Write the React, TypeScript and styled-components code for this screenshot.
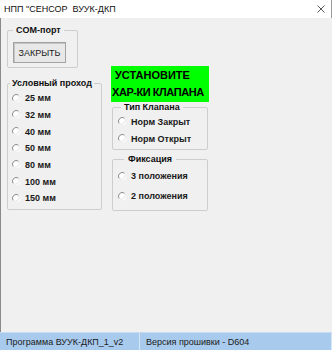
import React from 'react'
import styled, { createGlobalStyle } from 'styled-components'

const GlobalStyle = createGlobalStyle`
  html, body {
    margin: 0;
    padding: 0;
    width: 332px;
    height: 350px;
    overflow: hidden;
    background: #f0f0f0;
  }
  body {
    font-family: "Liberation Sans", Arial, sans-serif;
    color: #000;
  }
`

const Window = styled.div`
  width: 332px;
  height: 350px;
  display: flex;
  flex-direction: column;
  background: #f0f0f0;
`

const TitleBar = styled.div`
  height: 18px;
  flex: none;
  display: flex;
  align-items: center;
  justify-content: space-between;
  background: #fff;
  border-right: 1px solid #9a9a9a;
  box-sizing: border-box;
  padding: 0 6px 0 4px;
`

const Title = styled.span`
  font-size: 9px;
  white-space: pre;
  color: #111;
`

const Body = styled.div`
  flex: 1;
  display: flex;
  align-items: flex-start;
  gap: 9px;
  border-left: 1px solid #8a8a8a;
  padding: 7px 0 0 6px;
`

const Column = styled.div<{ $top?: number }>`
  display: flex;
  flex-direction: column;
  align-items: flex-start;
  margin-top: ${({ $top }) => $top ?? 0}px;
`

const Group = styled.fieldset<{ $width: number; $top?: number; $left?: number; $bottom?: number }>`
  width: ${({ $width }) => $width}px;
  box-sizing: border-box;
  margin: ${({ $top }) => $top ?? 0}px 0 0 ${({ $left }) => $left ?? 0}px;
  padding: 0 0 ${({ $bottom }) => $bottom ?? 2}px 0;
  border: 1px solid #cdcdcd;
  border-radius: 2px;
  min-width: 0;
`

const Legend = styled.legend<{ $left: number; $pad?: number }>`
  font-size: 9px;
  line-height: 11px;
  font-weight: bold;
  padding: 0 ${({ $pad }) => $pad ?? 3}px;
  margin-left: ${({ $left }) => $left}px;
  color: #111;
`

const ToggleButton = styled.div`
  width: 53px;
  height: 21px;
  box-sizing: border-box;
  margin: 6px 0 1px 5px;
  display: flex;
  align-items: center;
  justify-content: center;
  font-size: 9px;
  color: #222;
  background: #e8e8e8;
  border: 1px solid #a2a2a2;
  box-shadow: inset 1px 1px 0 #c4c4c4;
`

const RadioList = styled.div<{ $row: number; $left: number; $top?: number }>`
  display: flex;
  flex-direction: column;
  padding-left: ${({ $left }) => $left}px;
  margin-top: ${({ $top }) => $top ?? 0}px;
  & > div {
    height: ${({ $row }) => $row}px;
  }
`

const RadioRow = styled.div`
  display: flex;
  align-items: center;
  gap: 4px;
  font-size: 9px;
  font-weight: bold;
  color: #1a1a1a;
`

const Banner = styled.div`
  width: 98px;
  height: 36px;
  box-sizing: border-box;
  background: #00ff00;
  display: flex;
  flex-direction: column;
  justify-content: center;
  padding-left: 1px;
  font-size: 11px;
  font-weight: bold;
  line-height: 17px;
  color: #000;
`

const BannerLine = styled.span<{ $indent?: number; $tight?: boolean }>`
  padding-left: ${({ $indent }) => $indent ?? 0}px;
  letter-spacing: ${({ $tight }) => ($tight ? '-0.45px' : '0')};
  white-space: nowrap;
`

const StatusBar = styled.div`
  height: 18px;
  flex: none;
  display: flex;
  background: #a8caed;
  border-top: 1px solid #c8ddf2;
  box-sizing: border-box;
`

const StatusPanel = styled.div<{ $width?: number }>`
  ${({ $width }) => ($width ? `width: ${$width}px; flex: none;` : 'flex: 1;')}
  display: flex;
  align-items: center;
  padding-left: 6px;
  font-size: 9px;
  color: #1a1a1a;
  border-right: 1px solid #d6e6f6;
  box-sizing: border-box;
`

function Radio({ label }: { label: string }) {
  return (
    <RadioRow>
      <svg width="9" height="9" viewBox="0 0 9 9">
        <circle cx="4.5" cy="4.5" r="3.8" fill="#fff" />
        <path d="M1.2 6.5 A3.8 3.8 0 0 1 6.5 1.2" fill="none" stroke="#8c8c8c" strokeWidth="1" />
        <path d="M6.5 1.2 A3.8 3.8 0 0 1 1.2 6.5" fill="none" stroke="#e2e2e2" strokeWidth="1" />
      </svg>
      <span>{label}</span>
    </RadioRow>
  )
}

const diameters = ['25 мм', '32 мм', '40 мм', '50 мм', '80 мм', '100 мм', '150 мм']

export default function App() {
  return (
    <Window>
      <GlobalStyle />
      <TitleBar>
        <Title>НПП "СЕНСОР  ВУУК-ДКП</Title>
        <svg width="8" height="8" viewBox="0 0 8 8">
          <path d="M0.5 0.5 L7.5 7.5 M7.5 0.5 L0.5 7.5" stroke="#555" strokeWidth="1" />
        </svg>
      </TitleBar>
      <Body>
        <Column>
          <Group $width={71} $bottom={3}>
            <Legend $left={5}>COM-порт</Legend>
            <ToggleButton>ЗАКРЫТЬ</ToggleButton>
          </Group>
          <Group $width={95} $top={10} $bottom={2}>
            <Legend $left={2} $pad={2}>Условный проход</Legend>
            <RadioList $row={16.67} $left={4} $top={1}>
              {diameters.map((d) => (
                <Radio key={d} label={d} />
              ))}
            </RadioList>
          </Group>
        </Column>
        <Column $top={41}>
          <Banner>
            <BannerLine $indent={3}>УСТАНОВИТЕ</BannerLine>
            <BannerLine $tight>ХАР-КИ КЛАПАНА</BannerLine>
          </Banner>
          <Group $width={96} $left={1} $bottom={2}>
            <Legend $left={8}>Тип Клапана</Legend>
            <RadioList $row={17} $left={5}>
              <Radio label="Норм Закрыт" />
              <Radio label="Норм Открыт" />
            </RadioList>
          </Group>
          <Group $width={96} $left={1} $top={4} $bottom={4}>
            <Legend $left={11} $pad={4}>Фиксация</Legend>
            <RadioList $row={20} $left={5} $top={1}>
              <Radio label="3 положения" />
              <Radio label="2 положения" />
            </RadioList>
          </Group>
        </Column>
      </Body>
      <StatusBar>
        <StatusPanel $width={140}>Программа ВУУК-ДКП_1_v2</StatusPanel>
        <StatusPanel>Версия прошивки - D604</StatusPanel>
      </StatusBar>
    </Window>
  )
}
